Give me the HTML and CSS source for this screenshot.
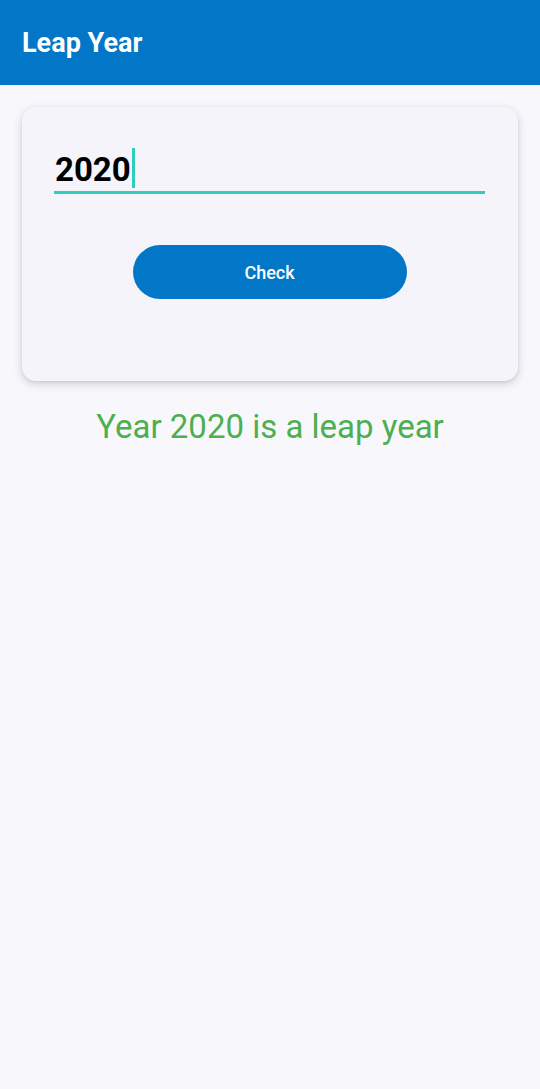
FILE: index.html
```html
<!DOCTYPE html>
<html lang="en">
<head>
<meta charset="utf-8">
<title>Leap Year</title>
<link rel="stylesheet" href="styles.css">
</head>
<body>
<header class="appbar">
  <h1 class="title">Leap Year</h1>
</header>
<main class="content">
  <section class="card">
    <div class="field">
      <span class="value">2020</span><span class="cursor"></span>
    </div>
    <div class="actions">
      <button class="btn" type="button">Check</button>
    </div>
  </section>
  <p class="result">Year 2020 is a leap year</p>
</main>
</body>
</html>
```

FILE: styles.css
```css
html, body {
  margin: 0;
  padding: 0;
}
body {
  background: #f8f8fc;
  font-family: Roboto, "Liberation Sans", Arial, sans-serif;
  width: 540px;
  min-height: 1089px;
}
.appbar {
  height: 85px;
  background: #0277c8;
  display: flex;
  align-items: center;
  padding-left: 22px;
  box-sizing: border-box;
}
.title {
  margin: 0;
  color: #ffffff;
  font-size: 27px;
  font-weight: 700;
  line-height: 30px;
}
.content {
  padding: 22px 22px 0;
}
.card {
  background: #f4f4fa;
  border-radius: 14px;
  box-shadow: 0 3px 10px rgba(0, 0, 0, 0.16), 0 1px 3px rgba(0, 0, 0, 0.08);
  padding: 41px 33px 82px 32px;
}
.field {
  height: 43px;
  border-bottom: 3px solid #30cdbd;
  display: flex;
  align-items: center;
  padding-left: 1px;
}
.value {
  font-size: 33px;
  font-weight: 700;
  line-height: 42px;
  color: #000000;
}
.cursor {
  display: inline-block;
  width: 3px;
  height: 40px;
  margin-left: 1px;
  margin-top: -3px;
  background: #30cdbd;
}
.actions {
  display: flex;
  justify-content: center;
  margin-top: 51px;
}
.btn {
  width: 274px;
  height: 54px;
  border: none;
  border-radius: 27px;
  background: #0277c8;
  color: #ffffff;
  font-family: Roboto, "Liberation Sans", Arial, sans-serif;
  font-size: 18px;
  font-weight: 500;
}
.result {
  margin: 27px 0 0;
  text-align: center;
  color: #4caf50;
  font-size: 33px;
  line-height: 38px;
}
```
